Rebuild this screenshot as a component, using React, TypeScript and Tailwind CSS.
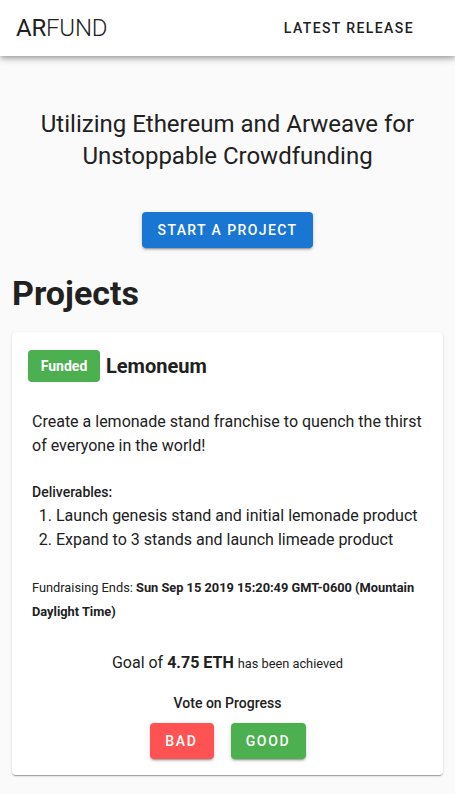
import React from "react";

function Header() {
  return (
    <header className="h-14 bg-white flex items-center justify-between pl-4 pr-[33px] shadow-[0_2px_4px_-1px_rgba(0,0,0,0.2),0_4px_5px_0_rgba(0,0,0,0.14),0_1px_10px_0_rgba(0,0,0,0.12)] relative z-10">
      <div className="text-[24px] leading-none text-[#212121] tracking-[-0.2px]">
        <span className="font-normal">AR</span>
        <span className="font-light">FUND</span>
      </div>
      <button className="px-2 py-1.5 text-[14px] font-medium tracking-[0.1em] uppercase text-[#212121]">
        Latest Release
      </button>
    </header>
  );
}

function ProjectCard() {
  return (
    <div className="bg-white rounded mx-3 mt-[18px] pt-[18px] px-4 pb-4 shadow-[0_2px_1px_-1px_rgba(0,0,0,0.2),0_1px_1px_0_rgba(0,0,0,0.14),0_1px_3px_0_rgba(0,0,0,0.12)]">
      {/* title row */}
      <div className="flex items-center gap-[6px]">
        <span className="h-8 w-[72px] rounded bg-[#4caf50] text-white text-[14px] font-bold flex items-center justify-center">
          Funded
        </span>
        <h3 className="text-[20px] font-bold text-[#212121] leading-none">Lemoneum</h3>
      </div>

      <div className="px-1 text-[#212121]">
        <p className="mt-[28px] text-[16px] leading-6">
          Create a lemonade stand franchise to quench the thirst of everyone in the world!
        </p>

        <div className="mt-6">
          <div className="text-[14px] font-medium leading-5">Deliverables:</div>
          <ol className="list-decimal pl-6 mt-[2px] text-[16px] leading-6">
            <li>Launch genesis stand and initial lemonade product</li>
            <li>Expand to 3 stands and launch limeade product</li>
          </ol>
        </div>

        <p className="mt-6 text-[12.8px] leading-6">
          Fundraising Ends:{" "}
          <span className="font-bold">
            Sun Sep 15 2019 15:20:49 GMT-0600 (Mountain Daylight Time)
          </span>
        </p>
      </div>

      <div className="mt-[27px] text-center text-[#212121]">
        <p className="text-[16px] leading-6">
          Goal of <span className="font-bold">4.75 ETH</span>{" "}
          <span className="text-[12.8px]">has been achieved</span>
        </p>
        <p className="mt-[17px] text-[14px] font-medium leading-5">Vote on Progress</p>
        <div className="mt-[10px] flex justify-center gap-[17px]">
          <button className="h-9 w-16 rounded bg-[#ff5252] text-white text-[14px] font-medium tracking-[0.12em] shadow-[0_3px_1px_-2px_rgba(0,0,0,0.2),0_2px_2px_0_rgba(0,0,0,0.14),0_1px_5px_0_rgba(0,0,0,0.12)]">
            BAD
          </button>
          <button className="h-9 w-[75px] rounded bg-[#4caf50] text-white text-[14px] font-medium tracking-[0.12em] shadow-[0_3px_1px_-2px_rgba(0,0,0,0.2),0_2px_2px_0_rgba(0,0,0,0.14),0_1px_5px_0_rgba(0,0,0,0.12)]">
            GOOD
          </button>
        </div>
      </div>
    </div>
  );
}

export default function App() {
  return (
    <div className="min-h-screen bg-[#fafafa] font-['Roboto',sans-serif] pb-5">
      <Header />

      <section className="px-3 text-center">
        <h1 className="mt-[52px] text-[24px] leading-8 text-[#212121]">
          Utilizing Ethereum and Arweave for Unstoppable Crowdfunding
        </h1>
        <button className="mt-10 h-9 w-[171px] rounded bg-[#1976d2] text-white text-[14px] font-medium tracking-[0.1em] shadow-[0_3px_1px_-2px_rgba(0,0,0,0.2),0_2px_2px_0_rgba(0,0,0,0.14),0_1px_5px_0_rgba(0,0,0,0.12)]">
          START A PROJECT
        </button>
      </section>

      <h2 className="mt-6 px-3 text-[34px] font-bold leading-[42px] text-[#212121]">Projects</h2>

      <ProjectCard />
    </div>
  );
}
